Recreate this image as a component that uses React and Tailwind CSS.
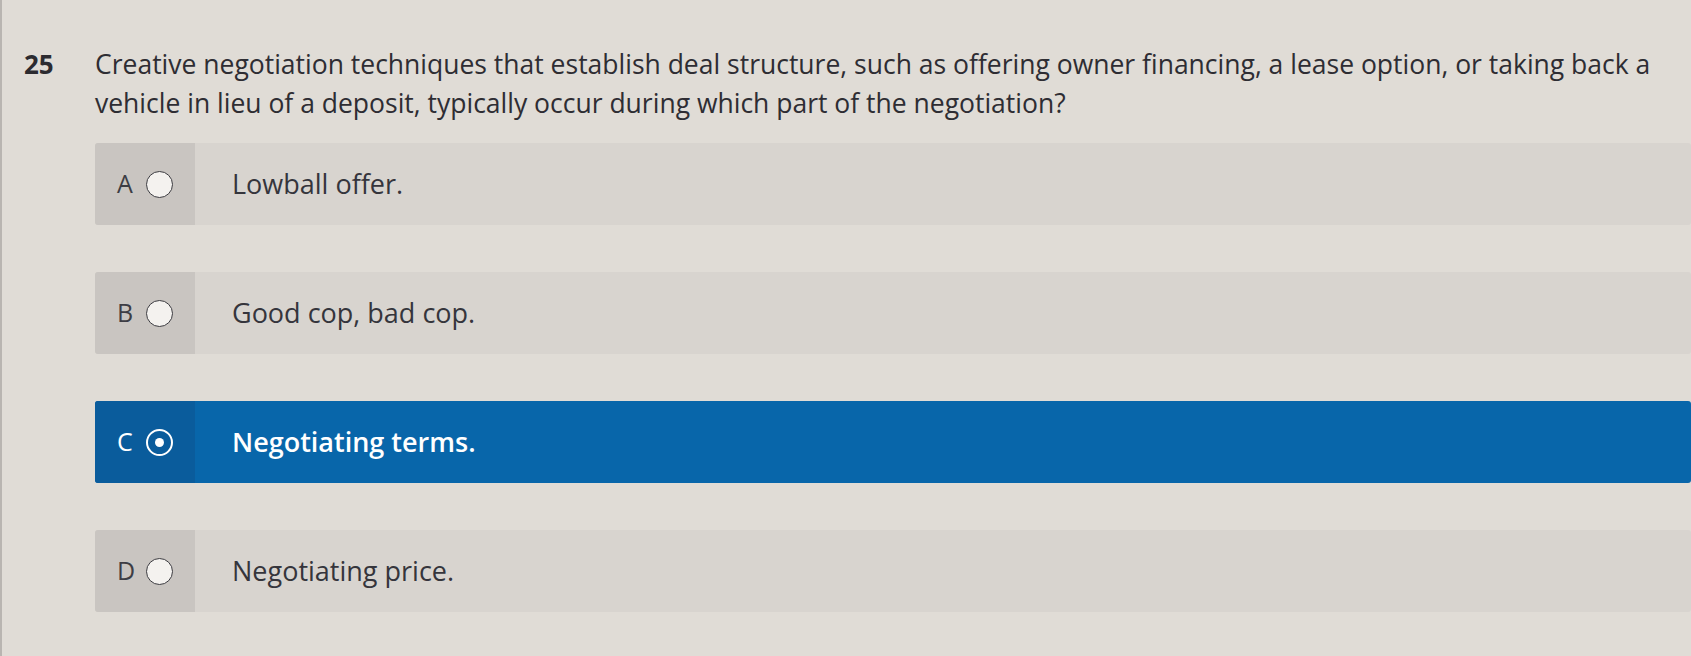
import React from "react";

function Radio({ checked }) {
  if (checked) {
    return (
      <span className="flex h-[27px] w-[27px] items-center justify-center rounded-full border-[2.5px] border-white">
        <span className="h-[9px] w-[9px] rounded-full bg-white" />
      </span>
    );
  }
  return <span className="h-[27px] w-[27px] rounded-full border-[1.5px] border-[#3b3b40] bg-[#f4f2ef]" />;
}

function Option({ letter, text, selected }) {
  return (
    <div className={`flex h-[82px] rounded-[3px] ${selected ? "bg-[#0866aa]" : "bg-[#d8d4cf]"}`}>
      <div
        className={`flex w-[100px] items-center gap-[11px] rounded-l-[3px] pl-[22px] ${
          selected ? "bg-[#0a5c9c] text-white" : "bg-[#c9c5c1] text-[#3d3d44]"
        }`}
      >
        <span className="w-[18px] text-[25px]">{letter}</span>
        <Radio checked={selected} />
      </div>
      <div
        className={`flex items-center pl-[37px] text-[27px] ${
          selected ? "font-semibold text-white" : "text-[#35353c]"
        }`}
      >
        {text}
      </div>
    </div>
  );
}

export default function App() {
  return (
    <div
      className="relative h-[656px] w-[1691px] overflow-hidden bg-[#e0dcd6] border-l-[2px] border-[#b9b5b1]"
      style={{ fontFamily: '"Open Sans", "Noto Sans", sans-serif' }}
    >
      <div className="flex pl-[22px] pt-[45px]">
        <div className="w-[71px] text-[26px] font-bold leading-[39px] text-[#2c2b30]">25</div>
        <div className="flex-1 pr-[20px] text-[26.5px] leading-[39px] text-[#2e2d33]">
          Creative negotiation techniques that establish deal structure, such as offering owner financing, a lease option, or taking back a vehicle in lieu of a deposit, typically occur during which part of the negotiation?
        </div>
      </div>
      <div className="ml-[93px] mt-[20px] flex flex-col gap-[47px]">
        <Option letter="A" text="Lowball offer." />
        <Option letter="B" text="Good cop, bad cop." />
        <Option letter="C" text="Negotiating terms." selected />
        <Option letter="D" text="Negotiating price." />
      </div>
    </div>
  );
}
